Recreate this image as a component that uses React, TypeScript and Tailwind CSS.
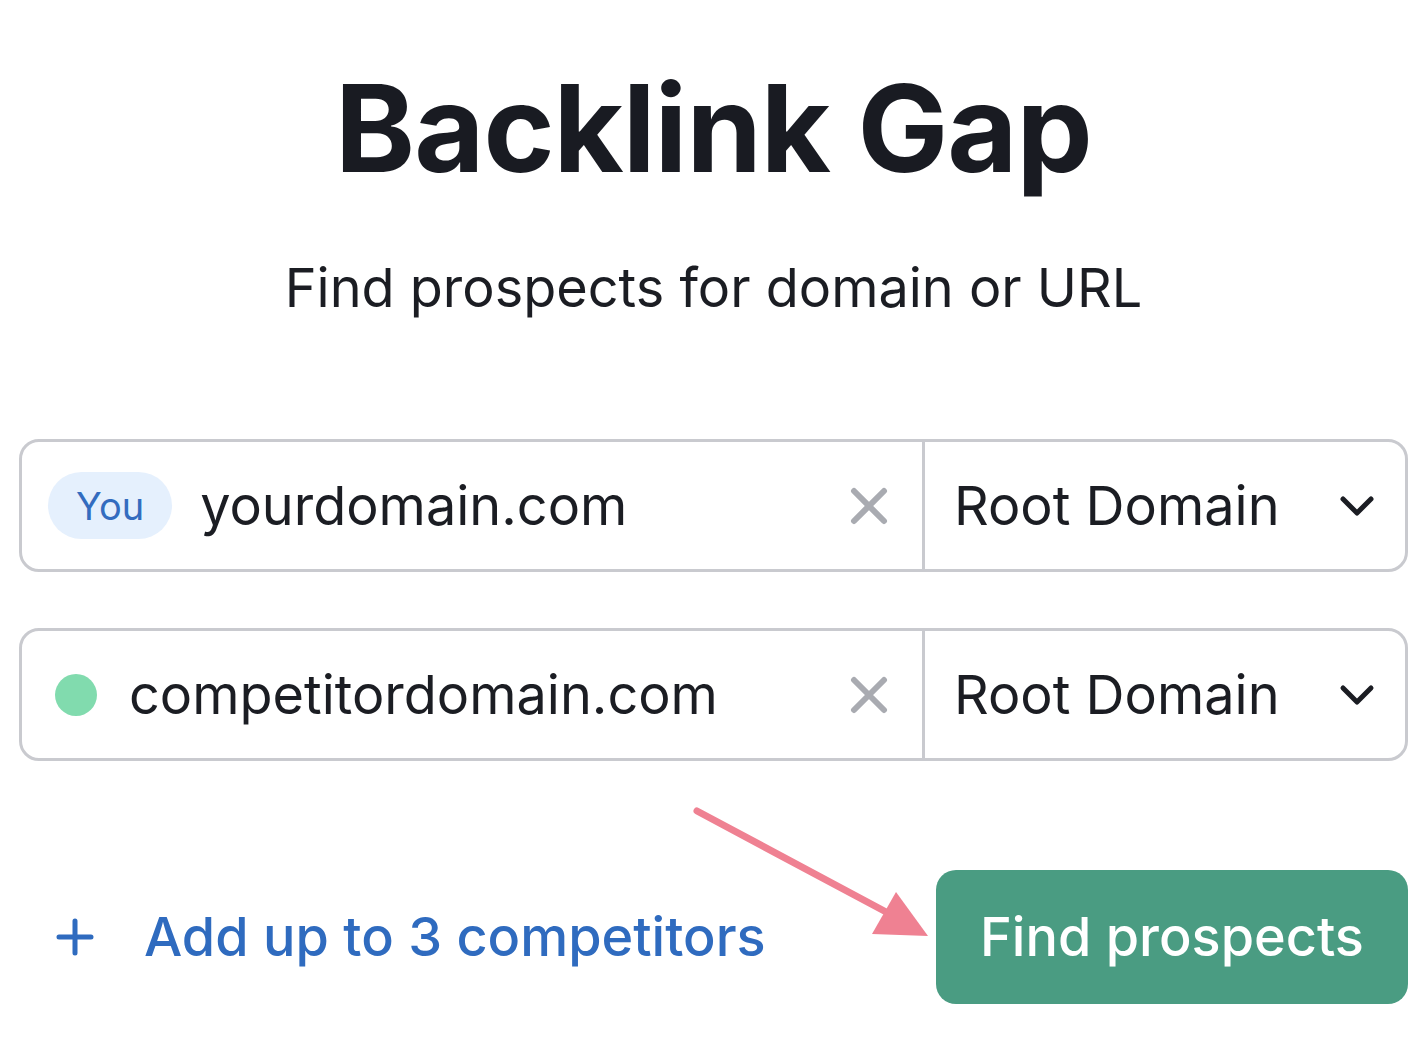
import React from 'react'

const FONT = { fontFamily: 'Inter, "Noto Sans", sans-serif' }

function ClearIcon() {
  return (
    <svg width="38" height="38" viewBox="0 0 38 38" className="shrink-0">
      <path d="M4 4 L34 34 M34 4 L4 34" stroke="#a9abb1" strokeWidth="6" strokeLinecap="round" />
    </svg>
  )
}

function Chevron() {
  return (
    <svg width="36" height="22" viewBox="0 0 36 22" className="shrink-0">
      <path d="M4 4 L18 18 L32 4" stroke="#1b1d23" strokeWidth="5" fill="none" strokeLinecap="round" strokeLinejoin="round" />
    </svg>
  )
}

function DomainRow({ lead, value }: { lead: React.ReactNode; value: string }) {
  return (
    <div className="mx-[19px] h-[133px] flex border-[3px] border-[#c9cacf] rounded-[20px] bg-white">
      <div className="flex-1 flex items-center pr-[34px]">
        {lead}
        <span className="flex-1 text-[54px] text-[#1b1d23] leading-none">{value}</span>
        <ClearIcon />
      </div>
      <div className="w-[483px] border-l-[3px] border-[#c9cacf] flex items-center pl-[29px] pr-[30px]">
        <span className="flex-1 text-[54px] text-[#1b1d23] leading-none">Root Domain</span>
        <Chevron />
      </div>
    </div>
  )
}

export default function App() {
  return (
    <div className="relative w-full h-[1049px] bg-white overflow-hidden" style={FONT}>
      <h1 className="pt-[68px] text-center text-[121px] font-bold leading-none text-[#191b22] tracking-[-1px]">
        Backlink Gap
      </h1>
      <p className="mt-[72px] text-center text-[54px] leading-none text-[#1b1d23]">
        Find prospects for domain or URL
      </p>

      <div className="mt-[124px] flex flex-col gap-[56px]">
        <DomainRow
          value="yourdomain.com"
          lead={
            <span className="ml-[26px] mr-[28px] h-[67px] px-[28px] rounded-full bg-[#e5f0fd] text-[#336cbf] text-[38px] flex items-center leading-none">
              You
            </span>
          }
        />
        <DomainRow
          value="competitordomain.com"
          lead={<span className="ml-[33px] mr-[32px] w-[42px] h-[42px] rounded-full bg-[#81dbae] shrink-0" />}
        />
      </div>

      <div className="mt-[109px] flex items-center justify-between pl-[56px] pr-[19px]">
        <div className="flex items-center gap-[50px] text-[#2f6bbf]">
          <svg width="38" height="38" viewBox="0 0 38 38">
            <path d="M19 3 V35 M3 19 H35" stroke="#2f6bbf" strokeWidth="5" strokeLinecap="round" />
          </svg>
          <span className="text-[54px] font-medium leading-none">Add up to 3 competitors</span>
        </div>
        <button className="w-[472px] h-[134px] rounded-[20px] bg-[#4a9c82] text-white text-[54px] font-medium leading-none">
          Find prospects
        </button>
      </div>

      <svg className="absolute left-0 top-0 pointer-events-none" width="1427" height="1049">
        <line x1="697" y1="811" x2="888" y2="913" stroke="#ef8192" strokeWidth="7" strokeLinecap="round" />
        <polygon points="872,934 928,936 896,892" fill="#ef8192" />
      </svg>
    </div>
  )
}
